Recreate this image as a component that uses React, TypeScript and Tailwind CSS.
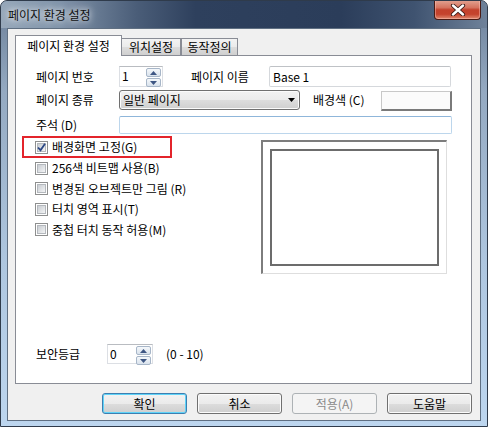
import React from "react";

const F = "font-['Noto_Sans_CJK_KR','Noto_Sans',sans-serif]";

function SpinBtn({ up }: { up: boolean }) {
  return (
    <div className="flex h-[9px] w-[15px] items-center justify-center rounded-[2px] border border-[#a7b6c8] bg-[linear-gradient(to_bottom,#f5f8fb,#d9e2ec)]">
      <svg width="7" height="4" viewBox="0 0 7 4">
        {up ? <path d="M0 4 L3.5 0 L7 4 Z" fill="#3e5683" /> : <path d="M0 0 L3.5 4 L7 0 Z" fill="#3e5683" />}
      </svg>
    </div>
  );
}

function Spin({ value, w, h }: { value: string; w: string; h: string }) {
  return (
    <div className={`flex ${w} ${h} items-start border border-[#dcdfe4] border-t-[#b9bcc1] bg-white`}>
      <span className="pl-[2px] pt-[1px] text-[12px] leading-[15px] text-black">{value}</span>
      <div className="ml-auto mr-[1px] mt-[1px] flex flex-col gap-[1px]">
        <SpinBtn up />
        <SpinBtn up={false} />
      </div>
    </div>
  );
}

function Check({ checked }: { checked?: boolean }) {
  return (
    <div className="relative h-[13px] w-[13px] shrink-0 border border-[#8e8f8f] bg-white p-[1px]">
      <div className="h-full w-full border border-[#b4b8bd] bg-[linear-gradient(135deg,#c9cdd2,#f3f4f5)]" />
      {checked && (
        <svg className="absolute left-0 top-0" width="11" height="11" viewBox="0 0 11 11">
          <path d="M2 5.5 L4.5 8.2 L9 1.8" fill="none" stroke="#2c4886" strokeWidth="1.8" />
        </svg>
      )}
    </div>
  );
}

function CheckRow({ label, checked }: { label: string; checked?: boolean }) {
  return (
    <div className="flex h-[20.5px] items-center gap-[4px] pl-[13px]">
      <Check checked={checked} />
      <span className="text-[12px] leading-none text-black">{label}</span>
    </div>
  );
}

function Btn({ label, kind }: { label: string; kind?: "default" | "disabled" }) {
  if (kind === "disabled") {
    return (
      <div className="flex h-[21px] w-[85px] items-center justify-center rounded-[3px] border border-[#adb2b5] bg-[#f4f4f4] text-[12px] leading-none text-[#8a8a8a]">
        {label}
      </div>
    );
  }
  const border = kind === "default" ? "border-[#3c7fb1] shadow-[inset_0_0_0_1px_#5fd3f8]" : "border-[#707070] shadow-[inset_0_0_0_1px_#fbfbfb]";
  return (
    <div className={`flex h-[21px] w-[85px] items-center justify-center rounded-[3px] border ${border} bg-[linear-gradient(to_bottom,#f2f2f2_0%,#ebebeb_50%,#dddddd_51%,#cfcfcf_100%)] text-[12px] leading-none text-black`}>
      {label}
    </div>
  );
}

export default function App() {
  return (
    <div className={`${F} h-[427px] w-[488px] overflow-hidden rounded-t-[7px] border border-[#2f3b4b] bg-[linear-gradient(to_bottom,#6b7f98_0px,#94a9c1_90px,#aec6df_260px,#bdd6ef_427px)]`}>
      {/* title bar */}
      <div className="flex h-[27px] items-start justify-between bg-[linear-gradient(to_right,#97a8ba_0%,#8194aa_12%,#4a5d78_28%,#2e405d_40%,#2b3d5a_70%,#3f5370_85%,#6f829a_100%)]">
        <div className="flex h-[27px] items-center pl-[7px]">
          <span className="text-[12px] leading-none text-[#111] [text-shadow:0_0_6px_rgba(255,255,255,0.9),0_0_10px_rgba(255,255,255,0.7)]">페이지 환경 설정</span>
        </div>
        <div className="-mt-[1px] mr-[6px] flex h-[20px] w-[47px] items-center justify-center rounded-b-[4px] border border-t-0 border-[#4a1b14] bg-[linear-gradient(to_bottom,#e3a594_0%,#d5735f_40%,#c3412c_52%,#c5432d_75%,#e08a70_100%)] shadow-[inset_0_0_0_1px_rgba(255,200,190,0.45)]">
          <svg width="16" height="12" viewBox="0 0 16 12">
            <path d="M3 1.5 L13 10.5 M13 1.5 L3 10.5" stroke="#3a1a16" strokeWidth="4.2" strokeLinecap="round" />
            <path d="M3 1.5 L13 10.5 M13 1.5 L3 10.5" stroke="#ffffff" strokeWidth="2.4" strokeLinecap="round" />
          </svg>
        </div>
      </div>

      {/* client */}
      <div className="mx-[6px] flex h-[393px] flex-col border border-[#5f6f82] bg-[#f0f0f0]">
        {/* tab headers */}
        <div className="relative z-10 mt-[6px] flex h-[21px] items-end pl-[7px]">
          <div className="flex h-[21px] w-[107px] items-center justify-center border border-b-0 border-[#898c95] bg-white pb-[1px] text-[12px] leading-none text-black">
            페이지 환경 설정
          </div>
          <div className="mb-[1px] flex h-[17px] w-[59px] items-center justify-center border border-b-0 border-l-0 border-[#898c95] bg-[linear-gradient(to_bottom,#f3f3f3_0%,#ebebeb_50%,#dddddd_51%,#cfcfcf_100%)] text-[12px] leading-none text-black">
            위치설정
          </div>
          <div className="mb-[1px] flex h-[17px] w-[57px] items-center justify-center border border-b-0 border-[#898c95] bg-[linear-gradient(to_bottom,#f3f3f3_0%,#ebebeb_50%,#dddddd_51%,#cfcfcf_100%)] text-[12px] leading-none text-black">
            동작정의
          </div>
        </div>

        {/* panel */}
        <div className="-mt-[1px] ml-[7px] flex h-[329px] w-[457px] flex-col border border-[#898c95] bg-white text-[12px] leading-none text-black">
          {/* row 1 */}
          <div className="ml-[20px] mt-[10px] flex h-[21px] items-center">
            <span className="w-[83px]">페이지 번호</span>
            <Spin value="1" w="w-[44px]" h="h-[21px]" />
            <span className="ml-[28px] w-[78px]">페이지 이름</span>
            <div className="flex h-[21px] w-[182px] items-center rounded-[2px] border border-[#d5d8dc] border-t-[#bfc2c6] bg-white pl-[3px]">
              Base 1
            </div>
          </div>
          {/* row 2 */}
          <div className="ml-[20px] mt-[3px] flex h-[20px] items-center">
            <span className="w-[83px]">페이지 종류</span>
            <div className="flex h-[20px] w-[181px] items-center rounded-[3px] border border-[#707070] bg-[linear-gradient(to_bottom,#f2f2f2_0%,#ebebeb_50%,#dddddd_51%,#cfcfcf_100%)] pl-[3px] shadow-[inset_0_0_0_1px_#fbfbfb]">
              <span>일반 페이지</span>
              <svg className="ml-auto mr-[4px]" width="7" height="4" viewBox="0 0 7 4">
                <path d="M0 0 L3.5 4 L7 0 Z" fill="#000" />
              </svg>
            </div>
            <span className="ml-[13px] w-[68px]">배경색 (C)</span>
            <div className="mt-[2px] h-[20px] w-[71px] border border-[#c8c8c8] border-b-[2px] border-r-[2px] border-b-[#7a7a7a] border-r-[#7a7a7a] bg-[#fbfbfb]" />
          </div>
          {/* row 3 */}
          <div className="ml-[20px] mt-[6px] flex h-[18px] items-center">
            <span className="w-[83px]">주석 (D)</span>
            <div className="h-[18px] w-[333px] rounded-[2px] border border-[#bcd6ec] border-t-[#8fb6da] bg-white" />
          </div>
          {/* area */}
          <div className="mt-[2px] flex h-[138px]">
            <div className="ml-[6px] flex w-[239px] flex-col">
              <div className="flex h-[22px] w-[150px] items-center gap-[4px] border-2 border-[#e3242b] pl-[11px]">
                <Check checked />
                <span className="text-[12px] leading-none text-black">배경화면 고정(G)</span>
              </div>
              <CheckRow label="256색 비트맵 사용(B)" />
              <CheckRow label="변경된 오브젝트만 그림 (R)" />
              <CheckRow label="터치 영역 표시(T)" />
              <CheckRow label="중첩 터치 동작 허용(M)" />
            </div>
            <div className="mt-[4px] h-[134px] w-[186px] border-b border-l-2 border-r border-t-2 border-b-[#dedede] border-l-[#7d7d7d] border-r-[#dedede] border-t-[#7d7d7d] pl-[7px] pt-[7px]">
              <div className="h-[117px] w-[169px] border-2 border-[#6c6c6c]" />
            </div>
          </div>
          {/* security */}
          <div className="ml-[20px] mt-[70px] flex h-[20px] items-center">
            <span className="w-[71px]">보안등급</span>
            <Spin value="0" w="w-[46px]" h="h-[20px]" />
            <span className="ml-[13px]">(0 - 10)</span>
          </div>
        </div>

        {/* buttons */}
        <div className="mr-[8px] mt-[9px] flex justify-end gap-[10px]">
          <Btn label="확인" kind="default" />
          <Btn label="취소" />
          <Btn label="적용(A)" kind="disabled" />
          <Btn label="도움말" />
        </div>
      </div>
    </div>
  );
}
